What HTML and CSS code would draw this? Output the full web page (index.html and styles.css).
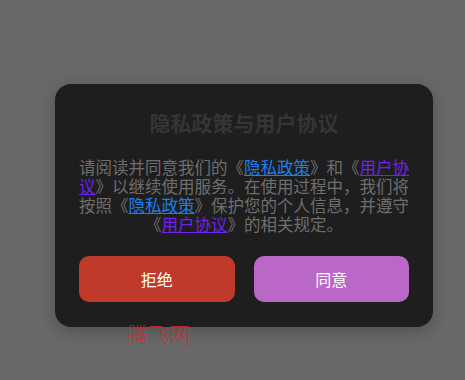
FILE: index.html
```html
<!DOCTYPE html>
<html lang="zh-CN">
<head>
    <meta charset="UTF-8">
    <meta name="viewport" content="width=device-width, initial-scale=1.0">
    <title>隐私政策与用户协议</title>
    <link rel="stylesheet" href="styles.css">
</head>
<body>
    <div class="overlay">
        <div class="dialog">
            <h2 class="dialog-title">隐私政策与用户协议</h2>
            <p class="dialog-text">请阅读并同意我们的《<a href="#" class="link-privacy">隐私政策</a>》和《<a href="#" class="link-terms">用户协议</a>》以继续使用服务。在使用过程中，我们将按照《<a href="#" class="link-privacy">隐私政策</a>》保护您的个人信息，并遵守《<a href="#" class="link-terms">用户协议</a>》的相关规定。</p>
            <div class="actions">
                <button class="btn btn-reject">拒绝</button>
                <button class="btn btn-agree">同意</button>
            </div>
        </div>
        <div class="watermark">腾飞网</div>
    </div>
</body>
</html>
```

FILE: styles.css
```css
body {
    margin: 0;
    padding: 0;
    background-color: #696969;
    font-family: "Noto Sans CJK SC", "Noto Sans", sans-serif;
}

.overlay {
    position: relative;
    height: 380px;
    padding: 84px 0 0 55px;
    box-sizing: border-box;
}

.dialog {
    width: 378px;
    box-sizing: border-box;
    padding: 24px 24px 25px 24px;
    background-color: #1e1e1e;
    border-radius: 16px;
    box-shadow: 0 4px 18px rgba(0, 0, 0, 0.25);
}

.dialog-title {
    margin: 0 0 22px;
    font-size: 21px;
    line-height: 28px;
    font-weight: bold;
    text-align: center;
    color: #353535;
}

.dialog-text {
    margin: 0;
    font-size: 16.5px;
    line-height: 19px;
    text-align: center;
    color: #6e6e6e;
}

.link-privacy {
    color: #1a7ff0;
}

.link-terms {
    color: #7020f0;
}

.actions {
    display: flex;
    gap: 19px;
    margin-top: 22px;
}

.btn {
    flex: 1;
    height: 46px;
    border: none;
    border-radius: 10px;
    font-family: inherit;
    font-size: 16px;
    color: #fff;
    cursor: pointer;
}

.btn-reject {
    background-color: #c0392b;
}

.btn-agree {
    background-color: #ba68c8;
}

.watermark {
    position: absolute;
    left: 127px;
    top: 318px;
    font-size: 21px;
    font-weight: 100;
    color: #e0202a;
}
```
